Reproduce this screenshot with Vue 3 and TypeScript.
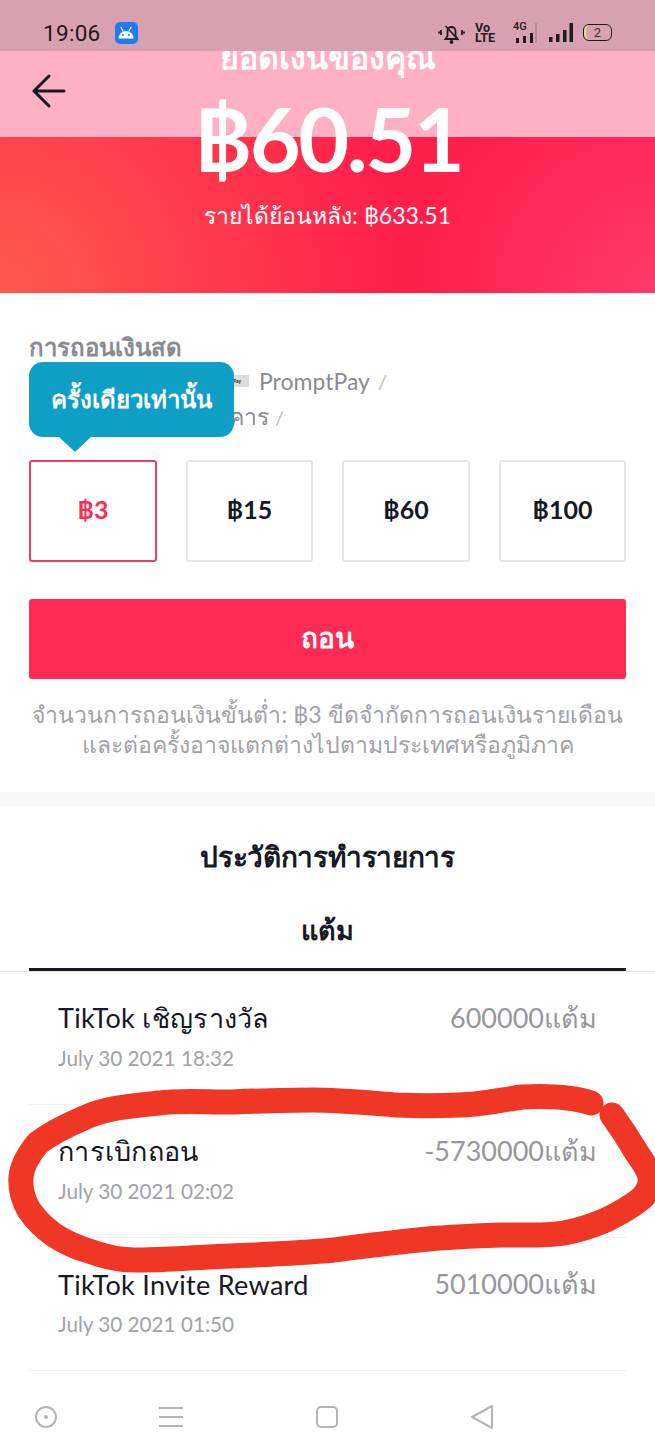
<template>
  <div class="page">
    <div class="status-bar">
      <div class="status-left">
        <span class="clock">19:06</span>
        <span class="app-badge">
          <svg width="18" height="14" viewBox="0 0 18 14">
            <path d="M1.5 12.5a7.5 7.5 0 0 1 15 0z" fill="#fff" />
            <path d="M4 1.5 6 5M14 1.5 12 5" stroke="#fff" stroke-width="1.2" stroke-linecap="round" />
            <circle cx="6" cy="9" r="1" fill="#1c7df2" />
            <circle cx="12" cy="9" r="1" fill="#1c7df2" />
          </svg>
        </span>
      </div>
      <div class="status-right">
        <svg class="bell" width="27" height="22" viewBox="0 0 27 22" fill="none" stroke="#1e1a20" stroke-width="1.8">
          <path d="M7.5 17h12l-2-3V9a4 4 0 0 0-8 0v5z" />
          <path d="M7.5 4l13 14" />
          <circle cx="13.5" cy="20" r="1" fill="#1e1a20" />
          <path d="M3 8v5M1 9.5v2M24 8v5M26 9.5v2" />
        </svg>
        <span class="volte">Vo<br />LTE</span>
        <span class="net">
          <span class="net-label">4G</span>
          <svg width="28" height="10" viewBox="0 0 28 10">
            <rect x="10" y="5" width="3" height="5" fill="#1e1a20" />
            <rect x="17" y="3" width="3" height="7" fill="#1e1a20" />
            <rect x="24" y="0" width="3" height="10" fill="#1e1a20" />
          </svg>
          <span class="net-bar"></span>
        </span>
        <svg width="24" height="20" viewBox="0 0 24 20">
          <rect x="0" y="14" width="3.5" height="5" fill="#1e1a20" />
          <rect x="7" y="11" width="3.5" height="8" fill="#1e1a20" />
          <rect x="14" y="7" width="3.5" height="12" fill="#1e1a20" />
          <rect x="20.5" y="0" width="3.5" height="19" fill="#1e1a20" />
        </svg>
        <span class="battery">2</span>
      </div>
    </div>

    <header class="hero">
      <div class="hero-band">
        <svg class="back" width="36" height="36" viewBox="0 0 36 36" fill="none" stroke="#161823" stroke-width="3" stroke-linecap="round">
          <path d="M33 18H3M18 3 3 18l15 15" />
        </svg>
      </div>
      <div class="hero-text">
        <div class="hero-label">ยอดเงินของคุณ</div>
        <div class="hero-amount">฿60.51</div>
        <div class="hero-sub">รายได้ย้อนหลัง: ฿633.51</div>
      </div>
    </header>

    <section class="withdraw">
      <h2 class="withdraw-title">การถอนเงินสด</h2>
      <div class="method-row">
        <span class="pp-icon">Pay</span>
        <span>PromptPay</span>
        <span class="slash">/</span>
      </div>
      <div class="method-row second">
        <span>บัญชีธนาคาร</span>
        <span class="slash">/</span>
      </div>
      <div class="tooltip">ครั้งเดียวเท่านั้น</div>
      <div class="amounts">
        <div
          v-for="(a, i) in amounts"
          :key="a"
          class="amount"
          :class="{ active: i === 0 }"
        >
          ฿{{ a }}
        </div>
      </div>
      <button class="withdraw-btn">ถอน</button>
      <p class="note">
        จำนวนการถอนเงินขั้นต่ำ: ฿3 ขีดจำกัดการถอนเงินรายเดือน<br />และต่อครั้งอาจแตกต่างไปตามประเทศหรือภูมิภาค
      </p>
    </section>

    <section class="history">
      <h2 class="history-title">ประวัติการทำรายการ</h2>
      <div class="tab"><span>แต้ม</span></div>
      <div class="rows">
        <div v-for="r in rows" :key="r.date" class="row">
          <div class="row-top">
            <span class="row-name">{{ r.name }}</span>
            <span class="row-value">{{ r.value }}แต้ม</span>
          </div>
          <div class="row-date">{{ r.date }}</div>
        </div>
      </div>
    </section>

    <nav class="nav-bar">
      <svg width="22" height="22" viewBox="0 0 22 22" fill="none" stroke="#b4b4b4" stroke-width="2">
        <circle cx="11" cy="11" r="10" />
        <circle cx="11" cy="11" r="2" fill="#b4b4b4" stroke="none" />
      </svg>
      <svg width="24" height="22" viewBox="0 0 24 22" fill="none" stroke="#b4b4b4" stroke-width="2">
        <path d="M0 2h24M0 11h24M0 20h24" />
      </svg>
      <svg width="22" height="22" viewBox="0 0 22 22" fill="none" stroke="#b4b4b4" stroke-width="2">
        <rect x="1" y="1" width="20" height="20" rx="4" />
      </svg>
      <svg width="24" height="24" viewBox="0 0 24 24" fill="none" stroke="#b4b4b4" stroke-width="2" stroke-linejoin="round">
        <path d="M22 1v22L2 12z" />
      </svg>
    </nav>

    <svg class="scribble" width="655" height="1456" viewBox="0 0 655 1456" fill="none">
      <path
        d="M591 1103C570 1096 545 1096 522 1097C500 1100 480 1105 459 1105C438 1106 418 1106 397 1105C370 1103 340 1100 313 1100C285 1100 258 1101 230 1102C205 1102 180 1100 159 1103C130 1106 105 1108 84 1118C65 1126 50 1134 38 1143C28 1155 22 1165 21 1177C20 1190 23 1200 29 1210C36 1220 44 1228 54 1235C66 1243 78 1248 92 1252C106 1257 120 1260 134 1260C160 1260 185 1258 209 1257C250 1255 292 1254 334 1250C362 1246 390 1243 418 1240C445 1237 473 1236 501 1235C522 1235 545 1236 564 1233C580 1230 592 1226 606 1220C620 1213 633 1206 643 1197C649 1190 651 1184 650 1177C648 1167 641 1160 635 1150C628 1138 620 1126 612 1115"
        stroke="#f03624"
        stroke-width="25"
        stroke-linecap="round"
        stroke-linejoin="round"
      />
    </svg>
  </div>
</template>

<script setup lang="ts">
const amounts = [3, 15, 60, 100];

const rows = [
  { name: 'TikTok เชิญรางวัล', value: '600000', date: 'July 30 2021 18:32' },
  { name: 'การเบิกถอน', value: '-5730000', date: 'July 30 2021 02:02' },
  { name: 'TikTok Invite Reward', value: '5010000', date: 'July 30 2021 01:50' }
];
</script>

<style>
html,
body {
  margin: 0;
  background: #fff;
}
</style>

<style scoped>
.page {
  position: relative;
  width: 655px;
  height: 1456px;
  overflow: hidden;
  background: #fff;
  font-family: 'Lato', 'Noto Sans', sans-serif;
  color: #161823;
}

.status-bar {
  position: absolute;
  top: 0;
  left: 0;
  right: 0;
  z-index: 3;
  height: 51px;
  padding: 14px 43px 0 43px;
  box-sizing: border-box;
  background: #d8a1b1;
  display: flex;
  align-items: center;
  justify-content: space-between;
}

.status-left,
.status-right {
  display: flex;
  align-items: center;
}

.clock {
  font-family: 'Roboto', sans-serif;
  font-size: 22.5px;
  color: #1e1a20;
  letter-spacing: 0.3px;
}

.app-badge {
  width: 23px;
  height: 22px;
  margin-left: 14px;
  border-radius: 5px;
  background: #1c7df2;
  display: flex;
  align-items: center;
  justify-content: center;
}

.status-right {
  gap: 10px;
}

.volte {
  width: 21px;
  font-family: 'Roboto', sans-serif;
  font-size: 12.5px;
  line-height: 10px;
  font-weight: 700;
  color: #1e1a20;
}

.net {
  position: relative;
  width: 30px;
  height: 20px;
  margin-right: 3px;
  display: flex;
  align-items: flex-end;
}

.net-label {
  position: absolute;
  left: 7px;
  top: -2px;
  font-family: 'Roboto', sans-serif;
  font-size: 11px;
  line-height: 11px;
  font-weight: 500;
  color: #1e1a20;
}

.net-bar {
  position: absolute;
  right: -1px;
  bottom: 0;
  width: 2px;
  height: 20px;
  background: #b08c98;
}

.battery {
  width: 27px;
  height: 15px;
  border: 1.5px solid #1e1a20;
  border-radius: 6px;
  box-shadow: inset 2px 0 #eed98a;
  font-family: 'Roboto', sans-serif;
  font-size: 13px;
  line-height: 15px;
  text-align: center;
  color: #3a2f36;
}

.hero {
  position: relative;
  height: 293px;
  padding-top: 39px;
  box-sizing: border-box;
  background:
    radial-gradient(circle at 0 100%, #ff5a4e 0, rgba(255, 31, 75, 0) 400px),
    radial-gradient(circle at 100% 100%, #ff3a6c 0, rgba(255, 31, 75, 0) 240px),
    #ff1f4b;
  color: #fff;
  text-align: center;
}

.hero-band {
  position: absolute;
  top: 51px;
  left: 0;
  right: 0;
  height: 86px;
  background: #ffb0c4;
}

.back {
  position: absolute;
  left: 31px;
  top: 22px;
}

.hero-text {
  position: relative;
}

.hero-label {
  font-size: 32px;
  line-height: 36px;
  font-weight: 700;
}

.hero-amount {
  font-size: 88px;
  line-height: 96px;
  font-weight: 700;
  letter-spacing: -2.5px;
  margin-top: 15px;
}

.hero-sub {
  font-size: 23px;
  line-height: 30px;
  margin-top: 14px;
}

.withdraw {
  position: relative;
  padding: 38px 29px 0;
  height: 513px;
  box-sizing: border-box;
  border-bottom: 14px solid #f8f8f8;
}

.withdraw-title {
  margin: 0;
  font-size: 24px;
  line-height: 32px;
  font-weight: 700;
  color: #8a8b91;
}

.method-row {
  display: flex;
  align-items: center;
  gap: 8px;
  margin-left: 204px;
  height: 36px;
  font-size: 23px;
  color: #8a8b91;
}

.method-row.second {
  margin-left: 106px;
  gap: 6px;
}

.pp-icon {
  width: 16px;
  height: 12px;
  margin-right: 2px;
  font-size: 5px;
  line-height: 12px;
  font-weight: 700;
  color: #222;
  background: #ddd;
}

.slash {
  color: #bbb;
  font-size: 20px;
}

.tooltip {
  position: absolute;
  left: 29px;
  top: 69px;
  width: 205px;
  height: 75px;
  border-radius: 14px;
  background: #0f9fc5;
  color: #fff;
  font-size: 24px;
  font-weight: 700;
  display: flex;
  align-items: center;
  justify-content: center;
}

.tooltip::after {
  content: '';
  position: absolute;
  left: 30px;
  top: 75px;
  border-left: 16px solid transparent;
  border-right: 16px solid transparent;
  border-top: 15px solid #0f9fc5;
}

.amounts {
  display: grid;
  grid-template-columns: repeat(4, 1fr);
  gap: 29px;
  margin-top: 25px;
}

.amount {
  height: 102px;
  padding-bottom: 5px;
  box-sizing: border-box;
  border: 2px solid #e6e6e8;
  border-radius: 3px;
  display: flex;
  align-items: center;
  justify-content: center;
  font-size: 25px;
  font-weight: 700;
}

.amount.active {
  border-color: #e8415f;
  color: #fe2c55;
}

.withdraw-btn {
  display: block;
  width: 100%;
  height: 80px;
  padding-bottom: 4px;
  margin-top: 37px;
  border: 0;
  border-radius: 3px;
  background: #fe2c55;
  color: #fff;
  font-family: inherit;
  font-size: 28px;
  font-weight: 700;
}

.note {
  margin: 20px 0 0;
  font-size: 23px;
  line-height: 30px;
  color: #a1a2a7;
  text-align: center;
  white-space: nowrap;
}

.history-title {
  margin: 0;
  padding-top: 32px;
  font-size: 28px;
  letter-spacing: -0.3px;
  line-height: 36px;
  font-weight: 700;
  text-align: center;
}

.tab {
  margin-top: 38px;
  height: 59px;
  padding: 0 29px;
  border-bottom: 1px solid #e3e3e4;
  text-align: center;
  font-size: 27px;
  font-weight: 700;
  line-height: 36px;
}

.tab span {
  display: block;
  height: 56px;
  border-bottom: 3px solid #161823;
}

.rows {
  padding: 0 29px;
}

.row {
  height: 133px;
  padding: 28px 29px 0;
  box-sizing: border-box;
  border-bottom: 1px solid #f1f1f2;
}

.row-top {
  display: flex;
  justify-content: space-between;
  align-items: center;
  height: 36px;
}

.row-name {
  font-size: 27px;
  letter-spacing: 0.3px;
}

.row-value {
  font-size: 27px;
  color: #96979c;
}

.row-date {
  margin-top: 8px;
  font-size: 20.7px;
  line-height: 28px;
  color: #a1a2a7;
}

.nav-bar {
  position: absolute;
  left: 35px;
  top: 1405px;
  display: flex;
  align-items: center;
}

.nav-bar svg:nth-child(2) {
  margin-left: 102px;
}

.nav-bar svg:nth-child(3) {
  margin-left: 133px;
}

.nav-bar svg:nth-child(4) {
  margin-left: 132px;
}

.scribble {
  position: absolute;
  top: 0;
  left: 0;
  pointer-events: none;
}
</style>
